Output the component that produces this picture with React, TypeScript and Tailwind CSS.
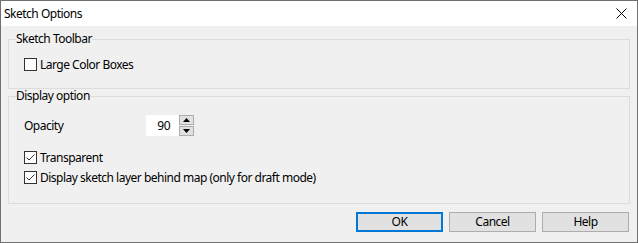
import React from "react";

const font = { fontFamily: '"Noto Sans", "Open Sans", sans-serif' };

function CheckBox({ checked, label }: { checked: boolean; label: string }) {
  return (
    <label className="flex h-[13px] items-center gap-[3px] text-[12px] text-black">
      <span className="flex h-[13px] w-[13px] items-center justify-center border border-[#333333] bg-white">
        {checked && (
          <svg width="11" height="11" viewBox="0 0 11 11">
            <path d="M1.5 5.5 L4 8 L9.5 2.5" fill="none" stroke="#333333" strokeWidth="1" />
          </svg>
        )}
      </span>
      <span className="leading-[13px]">{label}</span>
    </label>
  );
}

function Spinner({ value }: { value: number }) {
  return (
    <div className="flex h-[21px] items-stretch">
      <div className="flex w-[33px] items-center justify-end bg-white pr-[9px] text-[12px]">{value}</div>
      <div className="flex w-[15px] flex-col">
        <button className="flex h-[10px] items-center justify-center border border-[#adadad] bg-[#e1e1e1]">
          <svg width="7" height="4" viewBox="0 0 7 4">
            <path d="M0 4 L3.5 0 L7 4 Z" fill="#000" />
          </svg>
        </button>
        <button className="mt-[1px] flex h-[10px] items-center justify-center border border-[#adadad] bg-[#e1e1e1]">
          <svg width="7" height="4" viewBox="0 0 7 4">
            <path d="M0 0 L3.5 4 L7 0 Z" fill="#000" />
          </svg>
        </button>
      </div>
    </div>
  );
}

function DialogButton({ label, primary }: { label: string; primary?: boolean }) {
  return (
    <button
      className={
        primary
          ? "h-[20px] w-[87px] border-2 border-[#0078d7] bg-[#e1e1e1] text-[12px] leading-[16px]"
          : "h-[20px] w-[87px] border border-[#adadad] bg-[#e1e1e1] text-[12px] leading-[18px]"
      }
    >
      {label}
    </button>
  );
}

export default function App() {
  return (
    <div style={font} className="flex h-[243px] w-[638px] flex-col border border-[#707070] bg-[#f0f0f0] tracking-[-0.5px] text-black">
      {/* title bar */}
      <div className="flex h-[25px] items-center justify-between bg-white pl-[3px] pr-[10px]">
        <span className="text-[12px]">Sketch Options</span>
        <svg width="11" height="11" viewBox="0 0 11 11">
          <path d="M0.5 0.5 L10.5 10.5 M10.5 0.5 L0.5 10.5" stroke="#000" strokeWidth="1" />
        </svg>
      </div>

      <div className="flex flex-1 flex-col px-[7px] pt-[5px]">
        <fieldset className="h-[58px] border border-[#dcdcdc] px-[7px]">
          <legend className="text-[12px] leading-[16px]">Sketch Toolbar</legend>
          <div className="pl-[8px] pt-[11px]">
            <CheckBox checked={false} label="Large Color Boxes" />
          </div>
        </fieldset>

        <fieldset className="mt-[-1px] h-[116px] border border-[#dcdcdc] px-[7px]">
          <legend className="text-[12px] leading-[16px]">Display option</legend>
          <div className="flex flex-col pl-[8px] pt-[11px]">
            <div className="flex items-center">
              <span className="w-[122px] text-[12px]">Opacity</span>
              <Spinner value={90} />
            </div>
            <div className="mt-[15px]">
              <CheckBox checked label="Transparent" />
            </div>
            <div className="mt-[7px]">
              <CheckBox checked label="Display sketch layer behind map (only for draft mode)" />
            </div>
          </div>
        </fieldset>

        <div className="mt-[8px] flex justify-end gap-[6px] pr-[1px]">
          <DialogButton label="OK" primary />
          <DialogButton label="Cancel" />
          <DialogButton label="Help" />
        </div>
      </div>
    </div>
  );
}
